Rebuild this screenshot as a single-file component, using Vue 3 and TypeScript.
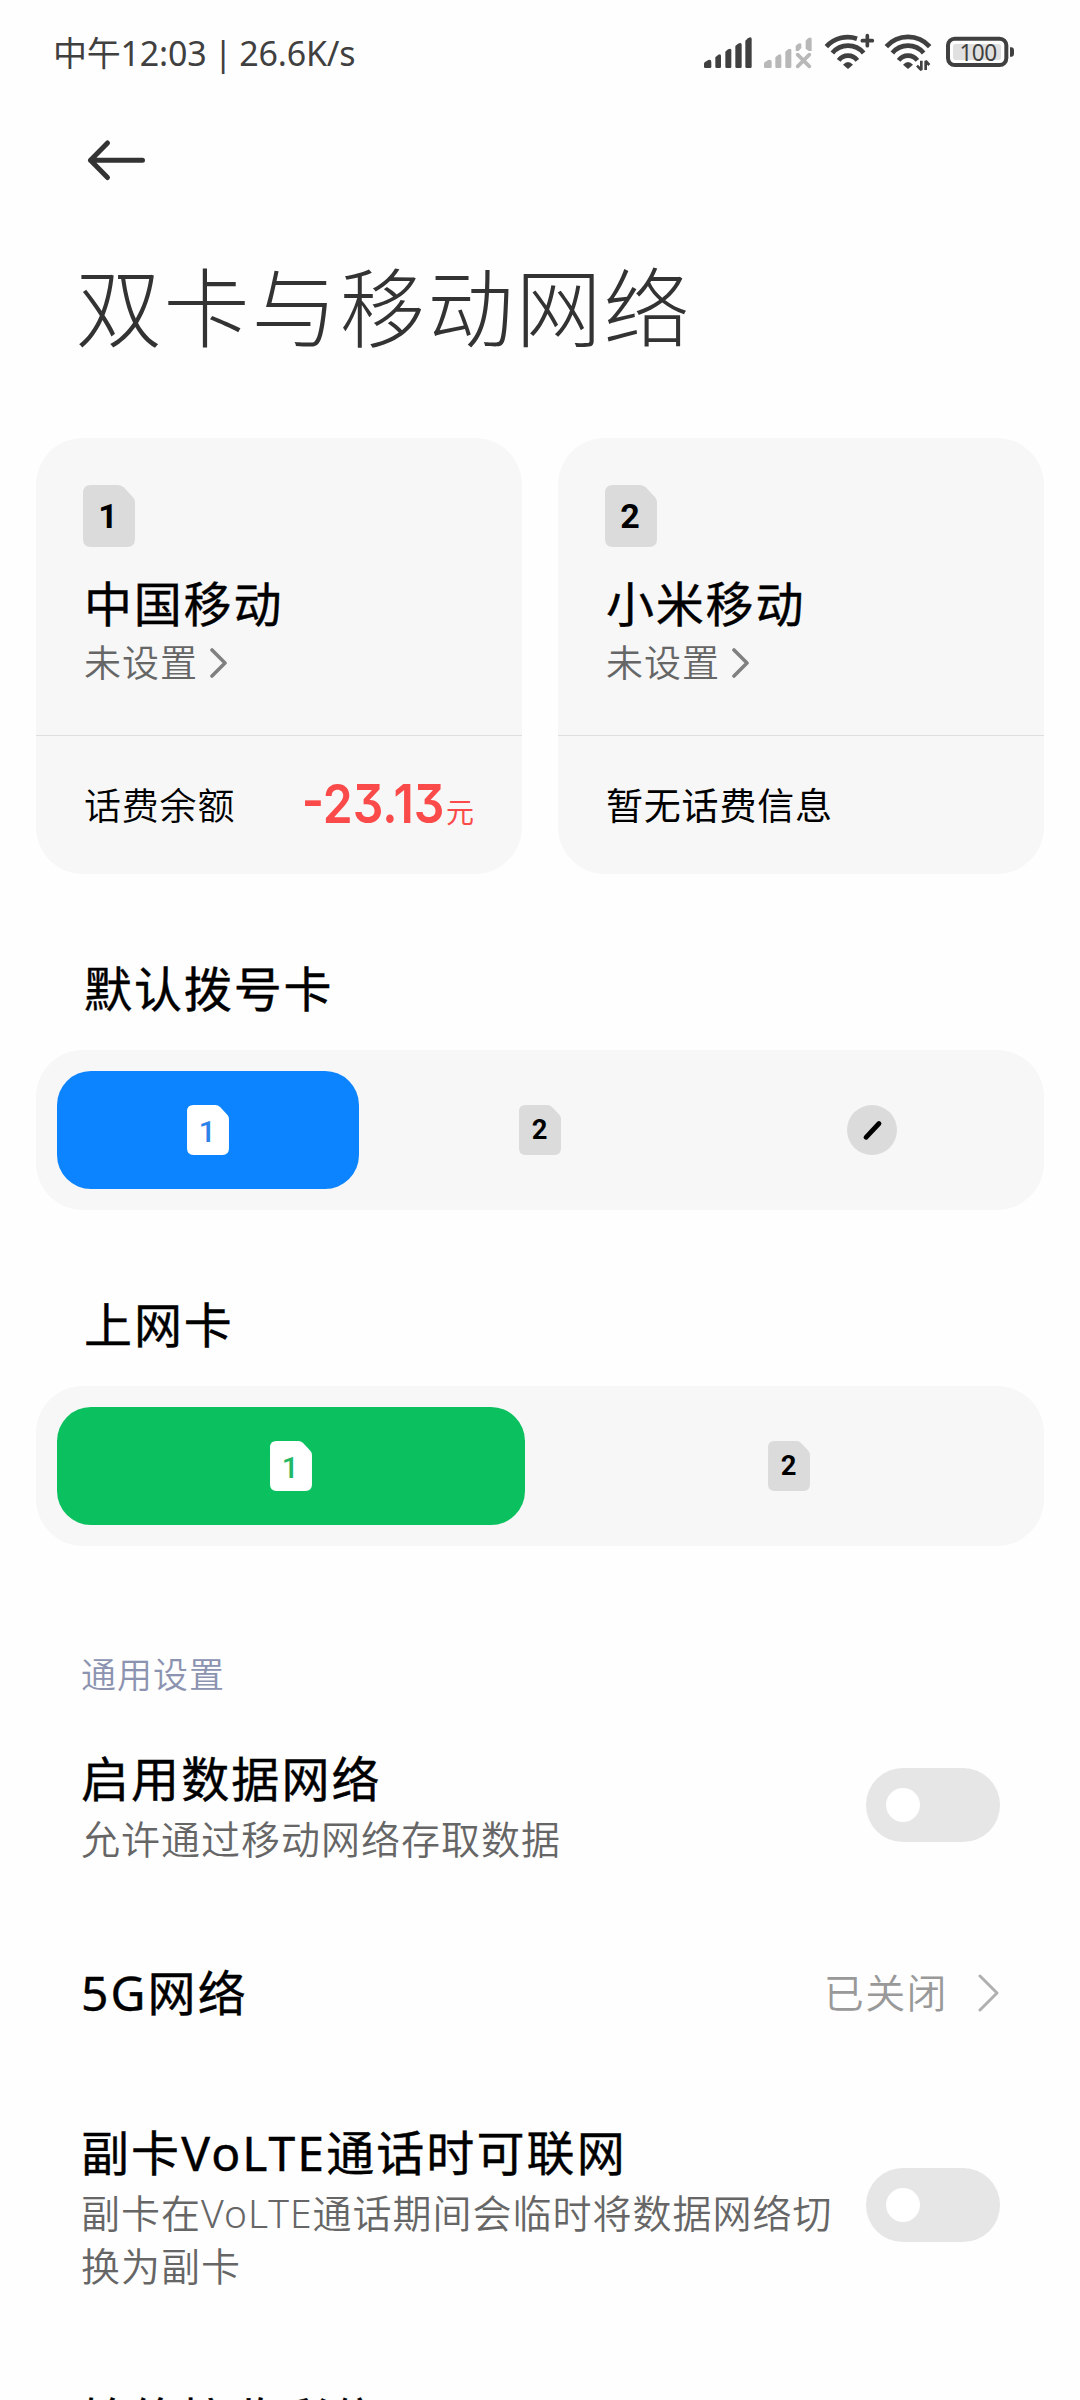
<script setup lang="ts">
interface SimCard {
  slot: number
  carrier: string
  note: string
  label: string
  amount?: string
}

interface SettingRow {
  title: string
  desc?: string
  value?: string
  kind: 'switch' | 'link'
  size: string
}

const cards: SimCard[] = [
  { slot: 1, carrier: '中国移动', note: '未设置', label: '话费余额', amount: '-23.13' },
  { slot: 2, carrier: '小米移动', note: '未设置', label: '暂无话费信息' },
]

const rows: SettingRow[] = [
  { title: '启用数据网络', desc: '允许通过移动网络存取数据', kind: 'switch', size: 'first' },
  { title: '5G网络', value: '已关闭', kind: 'link', size: 'second' },
  { title: '副卡VoLTE通话时可联网', desc: '副卡在VoLTE通话期间会临时将数据网络切换为副卡', kind: 'switch', size: 'third' },
]

const simShape = 'M8 0H35Q38.5 0 41 2.6L50.2 12.4Q52 14.4 52 17.5V54Q52 62 44 62H8Q0 62 0 54V8Q0 0 8 0Z'
</script>

<template>
  <div class="screen">
    <header class="status">
      <span class="status-text">中午12:03 | 26.6K/s</span>
      <span class="status-icons">
        <svg width="60" height="40" viewBox="72 36 180 120" fill="#404040">
          <path d="M72 140V131Q72 128 75 126L85 120Q94 118 94 126V140Q94 144 90 144H76Q72 144 72 140Z" />
          <path d="M106 140V112L114 105Q123 100 123 108V140Q123 144 119 144H110Q106 144 106 140Z" />
          <path d="M136 140V95L144 88Q154 83 154 91V140Q154 144 150 144H140Q136 144 136 140Z" />
          <path d="M166 140V78L174 71Q185 66 185 74V140Q185 144 181 144H170Q166 144 166 140Z" />
          <path d="M196 140V62L204 55Q215 48 215 58V140Q215 144 211 144H200Q196 144 196 140Z" />
        </svg>
        <svg width="60" height="40" viewBox="252 36 180 120" fill="#b8b8b8">
          <path d="M252 140V131Q252 128 255 126L265 120Q275 118 275 126V140Q275 144 271 144H256Q252 144 252 140Z" />
          <path d="M286 140V112L294 105Q304 100 304 108V140Q304 144 300 144H290Q286 144 286 140Z" />
          <path d="M316 140V95L324 88Q334 83 334 91V140Q334 144 330 144H320Q316 144 316 140Z" />
          <path d="M347 93V78L354 71Q364 67 364 74V84L356 93Z" />
          <path d="M377 93V62L384 55Q395 49 395 58V93H386L377 86Z" />
          <path d="M353 104L388 139M388 104L353 139" stroke="#b8b8b8" stroke-width="11" stroke-linecap="round" />
        </svg>
        <svg width="60" height="40" viewBox="432 36 180 120" fill="none" stroke="#404040" stroke-width="14">
          <path d="M439 80A87 87 0 0 1 531 56" />
          <path d="M457 99A61 61 0 0 1 551 99" />
          <path d="M476 121A35 35 0 0 1 532 121" />
          <path d="M504 147L489 134Q504 118 519 134Z" fill="#404040" stroke="none" />
          <path d="M562 47V77M547 62H577" stroke-width="11" stroke-linecap="round" />
        </svg>
        <svg width="60" height="40" viewBox="612 36 180 120" fill="none" stroke="#404040" stroke-width="14">
          <path d="M619 80A87 87 0 0 1 749 80" />
          <path d="M637 99A61 61 0 0 1 731 99" />
          <path d="M656 121A35 35 0 0 1 712 121" />
          <path d="M684 147L669 134Q684 118 699 134Z" fill="#404040" stroke="none" />
          <path d="M724 122V150L711 137M737 150V123L748 135" stroke-width="8" stroke-linejoin="bevel" />
        </svg>
        <svg width="72" height="40" viewBox="792 36 216 120">
          <rect x="804" y="56" width="175" height="79" rx="20" fill="none" stroke="#404040" stroke-width="12" />
          <rect x="819" y="72" width="144" height="48" rx="8" fill="#e0e0e0" />
          <path d="M990 82H996Q1002 84 1002 90V102Q1002 108 996 110H990Z" fill="#404040" />
          <text x="894" y="122" class="battery-text" text-anchor="middle">100</text>
        </svg>
      </span>
    </header>

    <nav class="nav">
      <svg width="60" height="60" viewBox="86 130 60 60" fill="none" stroke="#333" stroke-width="5" stroke-linecap="round" stroke-linejoin="round">
        <path d="M107.5 143L90.5 160.3L107.5 177.5M90.5 160.3H142.5" />
      </svg>
    </nav>

    <h1 class="title">双卡与移动网络</h1>

    <section class="cards">
      <article v-for="card in cards" :key="card.slot" class="card">
        <div class="card-top">
          <svg class="sim" width="52" height="62" viewBox="0 0 52 62">
            <path :d="simShape" fill="#dbdbdb" />
            <text x="25" y="43" class="sim-digit" font-size="34">{{ card.slot }}</text>
          </svg>
          <div class="carrier">{{ card.carrier }}</div>
          <div class="note">
            <span>{{ card.note }}</span>
            <svg width="18" height="30" viewBox="0 0 18 30" fill="none" stroke="#808080" stroke-width="3.6" stroke-linecap="round" stroke-linejoin="round">
              <path d="M2 2L15 15L2 28" />
            </svg>
          </div>
        </div>
        <div class="card-bottom" :class="{ strong: !card.amount }">
          <span>{{ card.label }}</span>
          <span v-if="card.amount" class="balance">
            <span class="amount">{{ card.amount }}</span><span class="unit">元</span>
          </span>
        </div>
      </article>
    </section>

    <h2 class="heading">默认拨号卡</h2>
    <div class="segments">
      <div class="segment blue">
        <svg width="42" height="50" viewBox="0 0 52 62">
          <path :d="simShape" fill="#fff" />
          <text x="25" y="45.5" class="sim-digit light" font-size="37" fill="#2b83ea">1</text>
        </svg>
      </div>
      <div class="segment">
        <svg width="42" height="50" viewBox="0 0 52 62">
          <path :d="simShape" fill="#dbdbdb" />
          <text x="25.5" y="42.5" class="sim-digit" font-size="34">2</text>
        </svg>
      </div>
      <div class="segment">
        <svg width="50" height="50" viewBox="0 0 50 50">
          <circle cx="25" cy="25" r="25" fill="#dbdbdb" />
          <path d="M19 32.3L32 18.5" stroke="#000" stroke-width="4.8" stroke-linecap="round" />
        </svg>
      </div>
    </div>

    <h2 class="heading">上网卡</h2>
    <div class="segments">
      <div class="segment green">
        <svg width="42" height="50" viewBox="0 0 52 62">
          <path :d="simShape" fill="#fff" />
          <text x="25" y="45.5" class="sim-digit light" font-size="37" fill="#22b864">1</text>
        </svg>
      </div>
      <div class="segment">
        <svg width="42" height="50" viewBox="0 0 52 62">
          <path :d="simShape" fill="#dbdbdb" />
          <text x="25.5" y="42.5" class="sim-digit" font-size="34">2</text>
        </svg>
      </div>
    </div>

    <div class="group-label">通用设置</div>

    <div v-for="row in rows" :key="row.title" class="row" :class="row.size">
      <div class="row-text">
        <div class="row-title">{{ row.title }}</div>
        <div v-if="row.desc" class="row-desc">{{ row.desc }}</div>
      </div>
      <span v-if="row.kind === 'switch'" class="switch"><i class="thumb"></i></span>
      <span v-else class="link">
        <span class="link-value">{{ row.value }}</span>
        <svg width="22" height="40" viewBox="0 0 22 40" fill="none" stroke="#b0b0b0" stroke-width="3" stroke-linecap="round" stroke-linejoin="round">
          <path d="M2 3L19 20L2 37" />
        </svg>
      </span>
    </div>

    <div class="row last">
      <div class="row-title">始终接收彩信</div>
    </div>
  </div>
</template>

<style>
body {
  margin: 0;
  background: #fefefe;
}
</style>

<style scoped>
.screen {
  width: 1080px;
  height: 2400px;
  overflow: hidden;
  background: #fefefe;
  color: #000;
  font-family: "Noto Sans", "Noto Sans CJK SC", sans-serif;
}

svg {
  display: block;
  flex: none;
}

h1,
h2 {
  margin: 0;
  font-weight: 400;
}

.status {
  display: flex;
  align-items: center;
  justify-content: space-between;
  height: 104px;
  padding: 0 64px 0 53px;
  color: #404040;
}

.status-text {
  padding-top: 2px;
  font-size: 34px;
  letter-spacing: -0.2px;
  line-height: 50px;
  white-space: pre;
  word-spacing: -1.5px;
}

.status-icons {
  display: flex;
}

.battery-text {
  font-family: "Noto Sans", sans-serif;
  font-size: 68px;
  letter-spacing: -2px;
  fill: #404040;
}

.nav {
  margin-top: 26px;
  padding-left: 86px;
}

.title {
  margin: 58px 0 0 75.5px;
  color: #333;
  font-size: 86px;
  font-weight: 250;
  letter-spacing: 2px;
  line-height: 120px;
  white-space: nowrap;
}

.cards {
  display: grid;
  grid-template-columns: 1fr 1fr;
  gap: 36px;
  margin: 70px 36px 0;
}

.card {
  height: 436px;
  border-radius: 47px;
  background: #f7f7f7;
}

.card-top {
  box-sizing: border-box;
  height: 298px;
  padding: 47px 47px 0;
  border-bottom: 1px solid #dfdfdf;
}

.sim-digit {
  font-family: Roboto, sans-serif;
  font-weight: 700;
  text-anchor: middle;
}

.sim-digit.light {
  font-weight: 500;
}

.carrier {
  margin: 27px 0 1px 1px;
  font-size: 48px;
  font-weight: 400;
  letter-spacing: 1.8px;
  line-height: 60px;
  -webkit-text-stroke: 0.4px #000;
}

.note {
  display: flex;
  align-items: center;
  gap: 12px;
  margin-left: 1px;
  color: #666;
  font-size: 37px;
  font-weight: 350;
  letter-spacing: 1px;
  line-height: 56px;
}

.card-bottom {
  display: flex;
  align-items: center;
  justify-content: space-between;
  box-sizing: border-box;
  height: 138px;
  padding: 0 48px 3px;
  font-size: 37px;
  font-weight: 350;
  letter-spacing: 0.8px;
}

.card-bottom.strong {
  font-weight: 400;
}

.balance {
  display: flex;
  align-items: baseline;
  color: #fb4a4a;
}

.amount {
  font-family: Inter, sans-serif;
  font-size: 54px;
  font-weight: 600;
  font-feature-settings: "cv09";
  letter-spacing: 0;
  transform: scaleX(0.89);
  transform-origin: right center;
}

.unit {
  margin-left: 2px;
  font-size: 28px;
  font-weight: 400;
  letter-spacing: 0;
}

.heading {
  margin: 80px 0 26px 84px;
  font-size: 48px;
  letter-spacing: 1.9px;
  line-height: 70px;
  -webkit-text-stroke: 0.4px #000;
}

.segments {
  display: flex;
  gap: 30px;
  box-sizing: border-box;
  height: 160px;
  margin: 0 36px;
  padding: 21px;
  border-radius: 47px;
  background: #f7f7f7;
}

.segment {
  display: flex;
  flex: 1;
  align-items: center;
  justify-content: center;
  border-radius: 34px;
}

.blue {
  background: #0d84ff;
}

.green {
  background: #0bc15f;
}

.group-label {
  margin: 104px 0 25px 81px;
  color: #8c93b0;
  font-size: 35px;
  font-weight: 350;
  letter-spacing: 1px;
  line-height: 50px;
}

.row {
  display: flex;
  align-items: center;
  justify-content: space-between;
  padding: 0 80px 0 81px;
}

.first {
  height: 160px;
}

.second {
  height: 216px;
}

.third {
  height: 210px;
}

.last {
  padding-top: 75px;
}

.row-text {
  width: 760px;
}

.second .row-text {
  width: auto;
}

.row-title {
  font-size: 48px;
  font-weight: 400;
  letter-spacing: 2.1px;
  line-height: 68px;
  white-space: nowrap;
  -webkit-text-stroke: 0.4px #000;
}

.row-desc {
  color: #666;
  font-size: 39px;
  font-weight: 350;
  letter-spacing: 1px;
  line-height: 52.7px;
}

.switch {
  box-sizing: border-box;
  flex: none;
  width: 134px;
  height: 74px;
  padding: 20px;
  border-radius: 37px;
  background: #e6e6e6;
}

.third .switch {
  margin-bottom: 2px;
}

.thumb {
  display: block;
  width: 34px;
  height: 34px;
  border-radius: 50%;
  background: #fff;
}

.link {
  display: flex;
  align-items: center;
  gap: 30px;
  color: #999;
  font-size: 40px;
  font-weight: 350;
  letter-spacing: 1.4px;
}

.link-value {
  padding-bottom: 4px;
}
</style>
